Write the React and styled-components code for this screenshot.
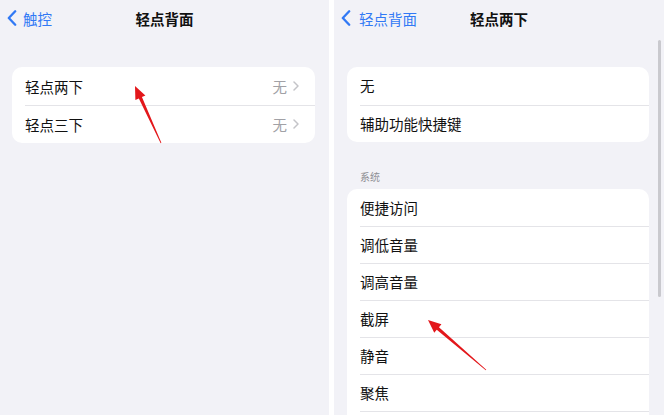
import React from 'react';
import styled, { createGlobalStyle } from 'styled-components';

const GlobalStyle = createGlobalStyle`
  html, body {
    margin: 0;
    padding: 0;
    background: #fff;
  }
  body {
    font-family: "Noto Sans CJK SC", "Noto Sans", sans-serif;
    -webkit-font-smoothing: antialiased;
  }
`;

/** Layout **/
const Screen = styled.div`
  position: relative;
  display: flex;
  gap: 5px;
  width: 664px;
  height: 415px;
  overflow: hidden;
  background: #fff;
`;

const Panel = styled.section`
  position: relative;
  flex: ${props => props.$flex || 'none'};
  width: ${props => props.$width || 'auto'};
  height: 100%;
  background: #f2f2f7;
  overflow: hidden;
`;

const NavBar = styled.header`
  display: grid;
  grid-template-columns: 1fr auto 1fr;
  align-items: center;
  height: 36px;
`;

const BackLink = styled.a`
  display: flex;
  align-items: center;
  gap: ${props => props.$gap || 7}px;
  padding-left: 7px;
  color: #3179f5;
  font-size: 14.5px;
  text-decoration: none;
  svg {
    display: block;
  }
`;

const Title = styled.h1`
  margin: 0;
  font-size: 14.5px;
  font-weight: 700;
  color: #111;
`;

const Content = styled.div`
  padding: ${props => props.$padding || '31px 14px 0 12px'};
`;

const Card = styled.ul`
  list-style: none;
  margin: 0;
  padding: 0;
  background: #fff;
  border-radius: 10px;
  overflow: hidden;
`;

const Row = styled.li`
  position: relative;
  display: flex;
  align-items: center;
  height: ${props => props.$height || 37}px;
  padding: 0 16px 0 13px;
  font-size: 14.5px;
  color: #111;

  & + &::before {
    content: '';
    position: absolute;
    top: 0;
    left: 13px;
    right: 0;
    height: 1px;
    background: #e4e4e8;
  }
`;

const Label = styled.span`
  flex: 1;
`;

const Detail = styled.span`
  display: flex;
  align-items: center;
  gap: 6px;
  color: #a1a1a6;
  font-size: 14.5px;
`;

const SectionHeader = styled.div`
  margin: 28px 0 5px 13px;
  height: 14px;
  line-height: 14px;
  font-size: 10px;
  color: #8e8e93;
`;

const ScrollBar = styled.div`
  position: absolute;
  top: 40px;
  right: 3px;
  width: 3px;
  height: 257px;
  border-radius: 2px;
  background: #c9c9ce;
`;

const Overlay = styled.svg`
  position: absolute;
  inset: 0;
  pointer-events: none;
`;

/** Icons **/
const BackChevron = () => (
  <svg width="10" height="16" viewBox="0 0 10 16">
    <path d="M8.2 1.3 L1.8 8 L8.2 14.7" fill="none" stroke="#3179f5"
      strokeWidth="2.3" strokeLinecap="round" strokeLinejoin="round" />
  </svg>
);

const Disclosure = () => (
  <svg width="6" height="10" viewBox="0 0 6 10">
    <path d="M1 1 L5 5 L1 9" fill="none" stroke="#c4c4c8"
      strokeWidth="1.5" strokeLinecap="round" strokeLinejoin="round" />
  </svg>
);

// tapered red pointer, drawn from its tail to the tip
const Pointer = ({ tail, tip, head = 13, wing = 5.5 }) => {
  const dx = tip[0] - tail[0];
  const dy = tip[1] - tail[1];
  const len = Math.hypot(dx, dy);
  const ux = dx / len, uy = dy / len;
  const nx = -uy, ny = ux;
  const bx = tip[0] - ux * head, by = tip[1] - uy * head;
  const pt = (x, y, w) => `${(x + nx * w).toFixed(2)},${(y + ny * w).toFixed(2)}`;
  const points = [
    pt(tail[0], tail[1], 0.4),
    pt(bx, by, 1.7),
    pt(bx, by, wing),
    `${tip[0]},${tip[1]}`,
    pt(bx, by, -wing),
    pt(bx, by, -1.7),
    pt(tail[0], tail[1], -0.4),
  ].join(' ');
  return <polygon points={points} fill="#e3171b" />;
};

const tapOptions = ['轻点两下', '轻点三下'];
// the last entry sits below the fold; only its top edge shows
const systemActions = ['便捷访问', '调低音量', '调高音量', '截屏', '静音', '聚焦', ''];

export default function App() {
  return (
    <>
      <GlobalStyle />
      <Screen>
        <Panel $width="329px">
          <NavBar>
            <BackLink $gap={6}><BackChevron />触控</BackLink>
            <Title>轻点背面</Title>
            <span />
          </NavBar>
          <Content>
            <Card>
              {tapOptions.map(name => (
                <Row key={name} $height={38}>
                  <Label>{name}</Label>
                  <Detail>无<Disclosure /></Detail>
                </Row>
              ))}
            </Card>
          </Content>
        </Panel>

        <Panel $flex="1">
          <NavBar>
            <BackLink $gap={8}><BackChevron />轻点背面</BackLink>
            <Title>轻点两下</Title>
            <span />
          </NavBar>
          <Content $padding="31px 15px 0 13px">
            <Card>
              <Row $height={37.5}><Label>无</Label></Row>
              <Row $height={37.5}><Label>辅助功能快捷键</Label></Row>
            </Card>
            <SectionHeader>系统</SectionHeader>
            <Card>
              {systemActions.map((name, i) => (
                <Row key={i}><Label>{name}</Label></Row>
              ))}
            </Card>
          </Content>
          <ScrollBar />
        </Panel>

        <Overlay width="664" height="415">
          <Pointer tail={[161, 143]} tip={[135, 86]} />
          <Pointer tail={[486, 370]} tip={[428, 320]} />
        </Overlay>
      </Screen>
    </>
  );
}
